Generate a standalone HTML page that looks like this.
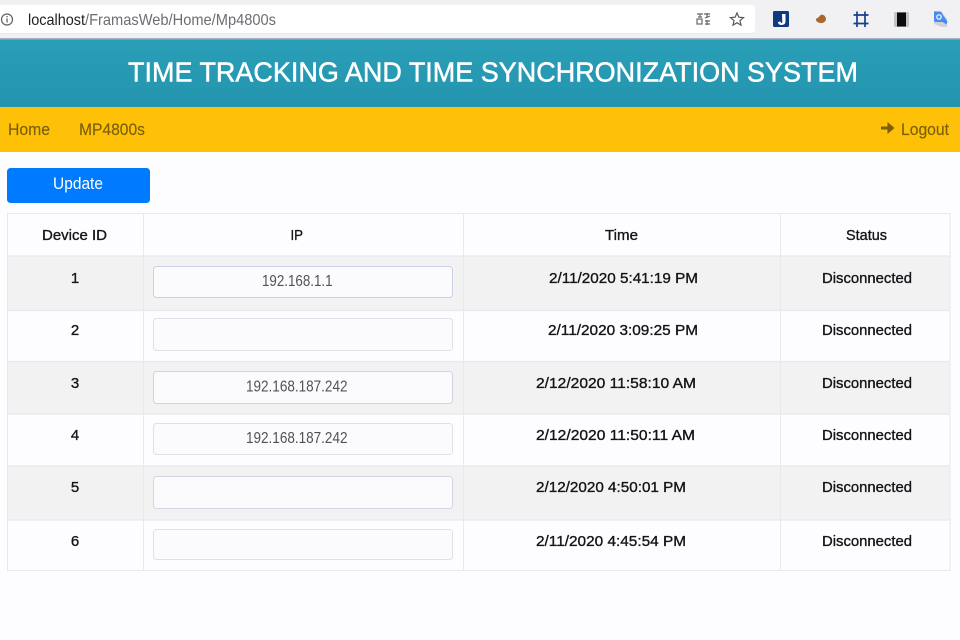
<!DOCTYPE html>
<html>
<head>
<meta charset="utf-8">
<title>Mp4800s</title>
<style>
html,body{margin:0;padding:0;width:960px;height:640px;overflow:hidden;background:#fdfcfe}
svg{display:block}
text{font-family:"Liberation Sans",sans-serif}
.b{font-size:15px;font-weight:500;fill:#141418;stroke:#141418;stroke-width:.35px}
.ip{font-size:15.500px;fill:#4f5257}
.nav{font-size:17px;fill:#7b6008;stroke:#7b6008;stroke-width:.15px}
</style>
</head>
<body>
<svg width="960" height="640" viewBox="0 0 960 640" xmlns="http://www.w3.org/2000/svg">
<defs>
<linearGradient id="h" x1="0" y1="0" x2="0" y2="1"><stop offset="0" stop-color="#2a9fb8"/><stop offset="1" stop-color="#2494ae"/></linearGradient>
</defs>
<!-- browser chrome -->
<rect width="960" height="39" fill="#f1f1f3"/>
<rect x="-6" y="5" width="761" height="28" rx="4" fill="#fff"/>
<rect x="0" y="33" width="755" height="1" fill="#e9e9ec"/>
<circle cx="7" cy="19.500" r="5.500" fill="none" stroke="#5f6368" stroke-width="1.200"/>
<rect x="6.400" y="18.500" width="1.300" height="4" fill="#5f6368"/><rect x="6.400" y="16" width="1.300" height="1.300" fill="#5f6368"/>
<text x="28" y="25" font-size="16" fill="#202124" textLength="57" lengthAdjust="spacingAndGlyphs">localhost</text>
<text x="85" y="25" font-size="16" fill="#6a6e73" textLength="191" lengthAdjust="spacingAndGlyphs">/FramasWeb/Home/Mp4800s</text>
<!-- translate icon -->
<g fill="none" stroke="#66686c" stroke-width="1.200">
<rect x="697" y="19" width="5" height="5"/><path d="M697 14h6M700 14v3M698 17h4"/><path d="M704 14h6M707 13v5M705 18l5-2M705 21h5M705 24h5M707 20v5"/>
</g>
<path d="M737 13l1.900 4.200 4.600.4-3.500 3 1 4.500-4-2.400-4 2.400 1-4.500-3.500-3 4.600-.4z" fill="none" stroke="#55585c" stroke-width="1.200"/>
<!-- extensions -->
<rect x="773" y="11" width="16" height="16" rx="1.500" fill="#0e3a80"/>
<path d="M782 14h3.500v7.500c0 2.500-2 3.500-4 3.500s-3.500-1-3.500-3l2.500-.5c0 1 .5 1.500 1 1.500s.8-.5.8-1.500z" fill="#fff"/>
<path d="M816 19c1-1 2-1 3-2.200 1-1.800 3-2.800 4.500-1.800 1.700 1 3.200 3.200 2.200 5.500-1 1.800-3 3-5.700 2.500-2.500-.5-4.500-2.300-4-4z" fill="#a8682d"/>
<g stroke="#163f8f" stroke-width="1.700" fill="none"><path d="M857 11.500v15.500M865 11.500v15.500M853.500 15h15M853.500 23.500h15"/></g>
<rect x="894" y="12" width="15" height="15" rx="1.500" fill="#c4c4c6"/>
<rect x="897" y="12.500" width="9" height="14" fill="#0b0b0d"/>
<path d="M934 12h8l5 7v8h-5l-8-3z" fill="#cfd2d4"/>
<path d="M935.500 11.500h5.500l1.500 3 5 7-1 3-4-2.500h-7c-1 0-1.500-.5-1.500-1.500v-8c0-1 .5-1.500 1.500-1.500z" fill="#4a8bf0"/>
<circle cx="939" cy="17" r="2.200" fill="none" stroke="#fff" stroke-width="1.200"/>
<!-- header -->
<rect x="0" y="38" width="960" height="1.500" fill="#9fb6bb"/>
<rect x="0" y="39.500" width="960" height="67.500" fill="url(#h)"/>
<text x="128" y="81.500" font-size="28" fill="#fff" stroke="#fff" stroke-width=".5" textLength="730" lengthAdjust="spacingAndGlyphs">TIME TRACKING AND TIME SYNCHRONIZATION SYSTEM</text>
<!-- nav -->
<rect x="0" y="107" width="960" height="45" fill="#ffc107"/>
<text class="nav" x="8" y="135" textLength="42" lengthAdjust="spacingAndGlyphs">Home</text>
<text class="nav" x="79" y="135" textLength="66" lengthAdjust="spacingAndGlyphs">MP4800s</text>
<path d="M881 126.500h6.500v-4.500l7 6-7 6v-4.500h-6.500z" fill="#7b6008"/>
<text class="nav" x="901" y="135" textLength="48" lengthAdjust="spacingAndGlyphs">Logout</text>
<!-- button -->
<rect x="7" y="168" width="143" height="35" rx="3.500" fill="#007bff"/>
<text x="53" y="189" font-size="16.500" fill="#fff" textLength="50" lengthAdjust="spacingAndGlyphs">Update</text>
<!-- table stripes -->
<rect x="7" y="256" width="943" height="54.500" fill="#f2f2f3"/>
<rect x="7" y="361" width="943" height="53" fill="#f2f2f3"/>
<rect x="7" y="466" width="943" height="54" fill="#f2f2f3"/>
<!-- table lines -->
<g fill="none" stroke="#e8e8ed" stroke-width="1">
<rect x="7.500" y="213.500" width="942.500" height="357"/>
<path d="M143.500 214v356M463.500 214v356M780.500 214v356"/>
<path d="M7 256h943M7 310.500h943M7 361.500h943M7 414h943M7 466h943M7 520h943" stroke-width="1.300"/>
</g>
<!-- inputs -->
<g fill="#fbfafd" stroke="#d3d6e3" stroke-width="1">
<rect x="153.500" y="266.500" width="299" height="31" rx="3" stroke="#c9d2e4"/>
<rect x="153.500" y="318.500" width="299" height="32" rx="3" stroke="#dfe0e8"/>
<rect x="153.500" y="371.500" width="299" height="32" rx="3" stroke="#cfd4e2"/>
<rect x="153.500" y="423.500" width="299" height="31" rx="3" stroke="#dfe0e8"/>
<rect x="153.500" y="476.500" width="299" height="32" rx="3" stroke="#d3d6e3"/>
<rect x="153.500" y="529.500" width="299" height="30" rx="3" stroke="#dfe0e8"/>
</g>
<!-- header text -->
<text class="b" x="42" y="240" textLength="65" lengthAdjust="spacingAndGlyphs">Device ID</text>
<text class="b" x="290.500" y="240" textLength="12.500" lengthAdjust="spacingAndGlyphs">IP</text>
<text class="b" x="605" y="240" textLength="33" lengthAdjust="spacingAndGlyphs">Time</text>
<text class="b" x="846" y="240" textLength="41" lengthAdjust="spacingAndGlyphs">Status</text>
<!-- row ids -->
<text class="b" x="75" y="283" text-anchor="middle">1</text>
<text class="b" x="75" y="335" text-anchor="middle">2</text>
<text class="b" x="75" y="388" text-anchor="middle">3</text>
<text class="b" x="75" y="440" text-anchor="middle">4</text>
<text class="b" x="75" y="492" text-anchor="middle">5</text>
<text class="b" x="75" y="546" text-anchor="middle">6</text>
<!-- ips -->
<text class="ip" x="262" y="286" textLength="70.500" lengthAdjust="spacingAndGlyphs">192.168.1.1</text>
<text class="ip" x="246" y="391.500" textLength="101.500" lengthAdjust="spacingAndGlyphs">192.168.187.242</text>
<text class="ip" x="246" y="443" textLength="101.500" lengthAdjust="spacingAndGlyphs">192.168.187.242</text>
<!-- times -->
<text class="b" x="549" y="283" textLength="149" lengthAdjust="spacingAndGlyphs">2/11/2020 5:41:19 PM</text>
<text class="b" x="548" y="335" textLength="150" lengthAdjust="spacingAndGlyphs">2/11/2020 3:09:25 PM</text>
<text class="b" x="536" y="388" textLength="160" lengthAdjust="spacingAndGlyphs">2/12/2020 11:58:10 AM</text>
<text class="b" x="536" y="440" textLength="159" lengthAdjust="spacingAndGlyphs">2/12/2020 11:50:11 AM</text>
<text class="b" x="536" y="492" textLength="150" lengthAdjust="spacingAndGlyphs">2/12/2020 4:50:01 PM</text>
<text class="b" x="536" y="546" textLength="150" lengthAdjust="spacingAndGlyphs">2/11/2020 4:45:54 PM</text>
<!-- status -->
<text class="b" x="822" y="283" textLength="90" lengthAdjust="spacingAndGlyphs">Disconnected</text>
<text class="b" x="822" y="335" textLength="90" lengthAdjust="spacingAndGlyphs">Disconnected</text>
<text class="b" x="822" y="388" textLength="90" lengthAdjust="spacingAndGlyphs">Disconnected</text>
<text class="b" x="822" y="440" textLength="90" lengthAdjust="spacingAndGlyphs">Disconnected</text>
<text class="b" x="822" y="492" textLength="90" lengthAdjust="spacingAndGlyphs">Disconnected</text>
<text class="b" x="822" y="546" textLength="90" lengthAdjust="spacingAndGlyphs">Disconnected</text>
</svg>
</body>
</html>
